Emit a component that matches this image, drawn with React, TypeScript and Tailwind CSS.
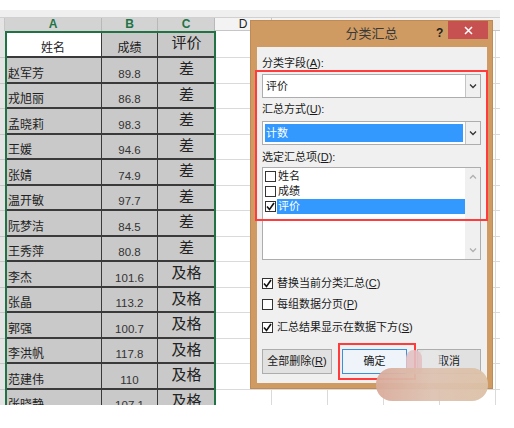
import React from 'react';

const rows = [
  ['赵军芳', '89.8', '差'],
  ['戎旭丽', '86.8', '差'],
  ['孟晓莉', '98.3', '差'],
  ['王媛', '94.6', '差'],
  ['张婧', '74.9', '差'],
  ['温开敏', '97.7', '差'],
  ['阮梦洁', '84.5', '差'],
  ['王秀萍', '80.8', '差'],
  ['李杰', '101.6', '及格'],
  ['张晶', '113.2', '及格'],
  ['郭强', '100.7', '及格'],
  ['李洪帆', '117.8', '及格'],
  ['范建伟', '110', '及格'],
  ['张晓静', '107.1', '及格'],
];

const font = "font-['Liberation_Sans','Noto_Sans_CJK_SC',sans-serif]";

function Check({ checked }: { checked?: boolean }) {
  return (
    <div className="w-[11px] h-[11px] shrink-0 border border-[#333] bg-white flex items-center justify-center">
      {checked && (
        <svg width="9" height="9" viewBox="0 0 9 9">
          <path d="M1 4.5 L3.5 7.5 L8 1" fill="none" stroke="#111" strokeWidth="1.6" />
        </svg>
      )}
    </div>
  );
}

function Chevron({ up, color = '#333' }: { up?: boolean; color?: string }) {
  return (
    <svg width="8" height="5" viewBox="0 0 8 5">
      <path d={up ? 'M1 4.5 L4 1.5 L7 4.5' : 'M1 0.5 L4 3.5 L7 0.5'} fill="none" stroke={color} strokeWidth="1.3" />
    </svg>
  );
}

function GridTail({ h }: { h: string }) {
  const ws = ['w-[57px]', 'w-[56px]', 'w-[56px]', 'w-[56px]', 'w-[56px]', 'w-[30px]'];
  return (
    <>
      {ws.map((w, i) => (
        <div key={i} className={`${w} ${h} shrink-0 border-r border-b border-[#dadada]`} />
      ))}
    </>
  );
}

function Sheet() {
  return (
    <div className="relative w-[500px] h-[395px] overflow-hidden bg-white">
      <div className="h-[8px] bg-[#efefef] border-b border-[#d0d0d0]" />
      <div className="flex h-[13px] text-[12px] leading-[13px]">
        <div className="w-[5px] shrink-0 bg-[#e4e4e4] border-r border-[#c6c6c6]" />
        <div className="w-[97px] shrink-0 bg-[#d3d3d3] border-r border-[#b8b8b8] text-center text-[#217346] font-bold">A</div>
        <div className="w-[56px] shrink-0 bg-[#d3d3d3] border-r border-[#b8b8b8] text-center text-[#217346] font-bold">B</div>
        <div className="w-[57px] shrink-0 bg-[#d3d3d3] border-r border-[#b8b8b8] text-center text-[#217346] font-bold">C</div>
        <div className="w-[57px] shrink-0 bg-[#f3f3f3] border-r border-b border-[#c6c6c6] text-center text-[#222]">D</div>
        <div className="flex-1 bg-[#f3f3f3] border-b border-[#c6c6c6]" />
      </div>

      <div className="flex h-[27px]">
        <div className="w-[5px] shrink-0 bg-[#e4e4e4] border-b border-[#c6c6c6]" />
        <div className="w-[97px] shrink-0 bg-white border-r border-b-2 border-[#3a3a3a] flex items-end justify-center text-[12px] leading-[16px] text-[#222]">姓名</div>
        <div className="w-[56px] shrink-0 bg-[#c9c9c9] border-r border-b-2 border-[#3a3a3a] flex items-end justify-center text-[12px] leading-[16px] text-[#222]">成绩</div>
        <div className="w-[57px] shrink-0 bg-[#c9c9c9] border-b-2 border-[#3a3a3a] flex items-start justify-center pt-[2px] text-[15px] leading-[20px] text-[#222]">评价</div>
        <GridTail h="h-[27px]" />
      </div>

      {rows.map(([name, score, grade]) => (
        <div key={name} className="flex h-[25.5px]">
          <div className="w-[5px] shrink-0 bg-[#e4e4e4] border-b border-[#c6c6c6]" />
          <div className="w-[97px] shrink-0 bg-[#c9c9c9] border-r border-b-2 border-[#3a3a3a] flex items-end pl-[3px] text-[12px] leading-[16px] text-[#222]">{name}</div>
          <div className="w-[56px] shrink-0 bg-[#c9c9c9] border-r border-b-2 border-[#3a3a3a] flex items-end justify-center text-[11.5px] leading-[15px] text-[#333]">{score}</div>
          <div className="w-[57px] shrink-0 bg-[#c9c9c9] border-b-2 border-[#3a3a3a] flex items-start justify-center pt-[1px] text-[15px] leading-[20px] text-[#222]">{grade}</div>
          <GridTail h="h-[25.5px]" />
        </div>
      ))}

      <div className="absolute left-[5px] top-[21px] w-[211px] h-[400px] border-2 border-[#217346] pointer-events-none" />
    </div>
  );
}

function Dialog() {
  return (
    <div className="absolute left-[250px] top-[20px] w-[243px] h-[369px] bg-[#cf9b63] border border-[#bf8a55] flex flex-col">
      <div className="relative h-[26px] shrink-0 flex items-center justify-center text-[13px] text-[#3a3a3a]">
        分类汇总
        <span className="absolute left-[185px] top-[3px] text-[12px] font-bold text-[#222]">?</span>
        <div className="absolute left-[197px] top-0 w-[40px] h-[18px] bg-[#c75050] flex items-center justify-center">
          <svg width="9" height="9" viewBox="0 0 9 9">
            <path d="M1 1 L8 8 M8 1 L1 8" stroke="#fff" strokeWidth="1.5" />
          </svg>
        </div>
      </div>

      <div className="relative flex-1 ml-[6px] mr-[5px] mb-[5px] bg-[#f0f0f0] pl-[5px] pr-[6px] pt-[8px] flex flex-col text-[11px] text-[#1a1a1a]">
        <div className="h-[16px] leading-[16px]">分类字段(<span className="underline">A</span>):</div>
        <div className="mt-[3px] h-[24px] flex bg-white border border-[#adadad]">
          <div className="flex-1 pl-[3px] flex items-center">评价</div>
          <div className="w-[15px] bg-[#f0f0f0] border-l border-[#c4c4c4] flex items-center justify-center">
            <Chevron />
          </div>
        </div>

        <div className="mt-[3px] h-[16px] leading-[16px]">汇总方式(<span className="underline">U</span>):</div>
        <div className="mt-[4px] h-[24px] flex bg-white border border-[#adadad]">
          <div className="flex-1 p-[2px]">
            <div className="h-full bg-[#3399ff] text-white pl-[1px] flex items-center">计数</div>
          </div>
          <div className="w-[15px] bg-[#f0f0f0] border-l border-[#c4c4c4] flex items-center justify-center">
            <Chevron />
          </div>
        </div>

        <div className="mt-[4px] h-[16px] leading-[16px]">选定汇总项(<span className="underline">D</span>):</div>
        <div className="mt-[2px] h-[93px] flex bg-white border border-[#adadad]">
          <div className="flex-1 pt-[1px]">
            <div className="h-[15px] flex items-center pl-[2px]">
              <Check />
              <span className="pl-[2px]">姓名</span>
            </div>
            <div className="h-[15px] flex items-center pl-[2px]">
              <Check />
              <span className="pl-[2px]">成绩</span>
            </div>
            <div className="h-[15px] flex items-center pl-[2px]">
              <Check checked />
              <span className="flex-1 h-full ml-[1px] pl-[1px] bg-[#3399ff] text-white leading-[15px]">评价</span>
            </div>
          </div>
          <div className="w-[15px] bg-[#f0f0f0] flex flex-col items-center justify-between py-[6px]">
            <Chevron up color="#b0b0b0" />
            <Chevron color="#b0b0b0" />
          </div>
        </div>

        <div className="mt-[15px] h-[16px] flex items-center gap-[4px]">
          <Check checked />
          <span>替换当前分类汇总(<span className="underline">C</span>)</span>
        </div>
        <div className="mt-[5px] h-[16px] flex items-center gap-[4px]">
          <Check />
          <span>每组数据分页(<span className="underline">P</span>)</span>
        </div>
        <div className="mt-[7px] h-[16px] flex items-center gap-[4px]">
          <Check checked />
          <span>汇总结果显示在数据下方(<span className="underline">S</span>)</span>
        </div>

        <div className="mt-[14px] h-[25px] flex gap-[10px]">
          <div className="w-[70px] bg-[#e1e1e1] border border-[#adadad] flex items-center justify-center">
            全部删除(<span className="underline">R</span>)
          </div>
          <div className="w-[65px] bg-[#eef4fa] border border-[#3c8fd8] flex items-center justify-center">确定</div>
          <div className="w-[64px] bg-[#e1e1e1] border border-[#adadad] flex items-center justify-center">取消</div>
        </div>

        <div className="absolute left-[-2px] top-[23px] w-[233px] h-[151px] border-2 border-[#ff3b3b] pointer-events-none" />
        <div className="absolute left-[81px] top-[296px] w-[78px] h-[37px] border-2 border-[#ff3b3b] pointer-events-none" />
      </div>
    </div>
  );
}

function Watermark() {
  return (
    <div className="absolute left-[376px] top-[348px] w-[115px] h-[56px] pointer-events-none">
      <div className="absolute left-[44px] top-[2px] w-[22px] h-[20px] rounded-[6px] bg-[#e9e9e9] opacity-60" />
      <div className="absolute left-[30px] top-[2px] w-[16px] h-[24px] rounded-t-[8px] bg-[#e2c0c3] opacity-90" />
      <div className="absolute left-[0px] top-[20px] w-[112px] h-[33px] rounded-[16px] bg-gradient-to-r from-[#d9ab9b] via-[#ddc2b1] to-[#dcc1a6] opacity-95" />
    </div>
  );
}

export default function App() {
  return (
    <div className={`relative w-[514px] h-[428px] bg-white overflow-hidden ${font}`}>
      <div className="pt-[10px]">
        <Sheet />
      </div>
      <Dialog />
      <Watermark />
    </div>
  );
}
